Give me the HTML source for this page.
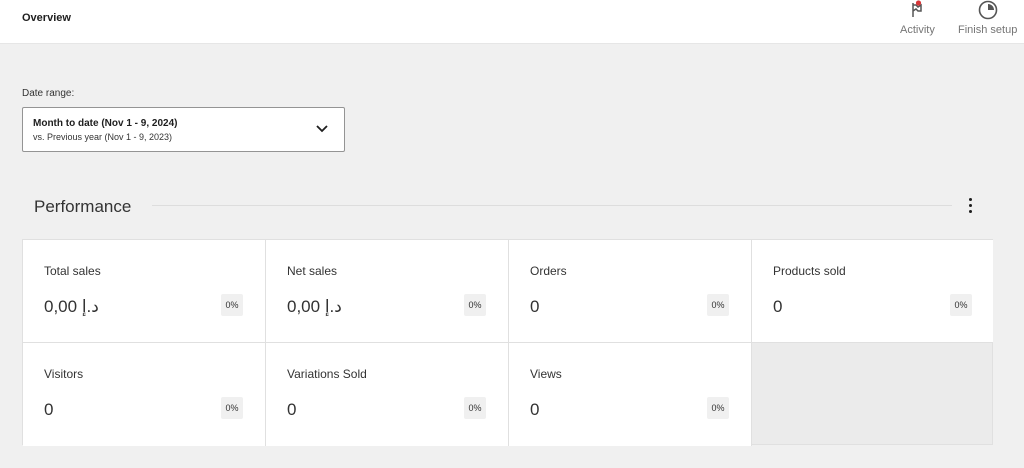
<!DOCTYPE html><html><head><meta charset="utf-8"><style>
*{margin:0;padding:0;box-sizing:border-box}
body{width:1024px;height:468px;background:#f0f0f0;font-family:"Liberation Sans","DejaVu Sans",sans-serif;color:#1e1e1e;position:relative;overflow:hidden}
.hdr{position:absolute;left:0;top:0;width:1024px;height:44px;background:#fff;border-bottom:1px solid #e6e6e6}
.t{position:absolute;font-size:11px}
.grid{position:absolute;left:22px;top:239px;width:971px;height:206px;border:1px solid #e0e0e0;background:#ebebeb}
.c{position:absolute;width:243px;height:103px;background:#fff;border-right:1px solid #e0e0e0;border-bottom:1px solid #e0e0e0}
.c .l{position:absolute;left:21px;top:24px;font-size:12px;color:#333}
.c .v{position:absolute;left:21px;top:57px;font-size:17px;color:#333}
.c .p{position:absolute;left:198px;top:54px;width:22px;height:22px;background:#f0f0f0;font-size:9px;color:#333;text-align:center;line-height:22px;border-radius:2px}
.ib{display:inline-block}
</style></head><body>
<div class="hdr">
<div class="t" style="left:22px;top:12px;font-weight:bold;font-size:11px">Overview</div>
<svg style="position:absolute;left:909px;top:0" width="20" height="20" viewBox="0 0 20 20"><path d="M4 3v14M4 5h3l2 2 3-2v6h-3l-2-2-3 2" fill="none" stroke="#555" stroke-width="1.5"/><circle cx="9.5" cy="3" r="2.6" fill="#d63638"/></svg>
<div class="t" style="left:900px;top:24px;color:#757575">Activity</div>
<svg style="position:absolute;left:977px;top:0" width="22" height="22" viewBox="0 0 22 22"><circle cx="11" cy="10" r="8.5" fill="none" stroke="#555" stroke-width="1.6"/><path d="M11 10V4a6 6 0 0 1 6 6z" fill="#555"/></svg>
<div class="t" style="left:958px;top:24px;color:#757575">Finish setup</div>
</div>
<div class="t" style="left:22px;top:88px;font-size:10px;color:#333">Date range:</div>
<div style="position:absolute;left:22px;top:107px;width:323px;height:45px;background:#fff;border:1px solid #949494;border-radius:2px">
<div class="t" style="left:10px;top:10px;font-weight:bold;font-size:10px">Month to date (Nov 1 - 9, 2024)</div>
<div class="t" style="left:10px;top:24px;font-size:9px;color:#333">vs. Previous year (Nov 1 - 9, 2023)</div>
<svg style="position:absolute;left:292px;top:15px" width="14" height="12"><path d="M2 3l5 5 5-5" fill="none" stroke="#1e1e1e" stroke-width="1.8"/></svg>
</div>
<div class="t" style="left:34px;top:197px;font-size:17px;color:#333">Performance</div>
<div style="position:absolute;left:152px;top:205px;width:800px;height:1px;background:#ddd"></div>
<div style="position:absolute;left:969px;top:198px;width:3px;height:3px;background:#1e1e1e;border-radius:50%;box-shadow:0 6px 0 #1e1e1e,0 12px 0 #1e1e1e"></div>
<div class="grid">
<div class="c" style="left:0;top:0"><div class="l">Total sales</div><div class="v">0,00 <span class="ib">إ</span><span class="ib">.</span><span class="ib">د</span></div><div class="p">0%</div></div>
<div class="c" style="left:243px;top:0"><div class="l">Net sales</div><div class="v">0,00 <span class="ib">إ</span><span class="ib">.</span><span class="ib">د</span></div><div class="p">0%</div></div>
<div class="c" style="left:486px;top:0"><div class="l">Orders</div><div class="v">0</div><div class="p">0%</div></div>
<div class="c" style="left:729px;top:0;width:241px;border-right:none"><div class="l">Products sold</div><div class="v">0</div><div class="p">0%</div></div>
<div class="c" style="left:0;top:103px;border-bottom:none"><div class="l">Visitors</div><div class="v">0</div><div class="p">0%</div></div>
<div class="c" style="left:243px;top:103px;border-bottom:none"><div class="l">Variations Sold</div><div class="v">0</div><div class="p">0%</div></div>
<div class="c" style="left:486px;top:103px;border-bottom:none"><div class="l">Views</div><div class="v">0</div><div class="p">0%</div></div>
</div>
</body></html>
